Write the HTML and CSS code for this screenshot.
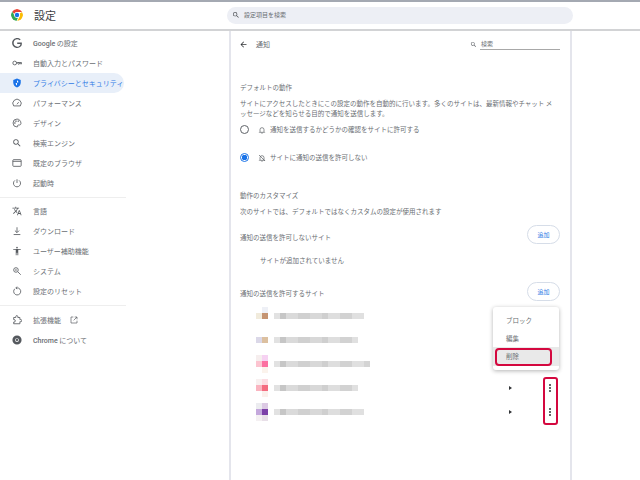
FILE: index.html
```html
<!DOCTYPE html>
<html lang="ja">
<head>
<meta charset="utf-8">
<title>設定</title>
<link rel="stylesheet" href="styles.css">
</head>
<body>
<header class="topbar">
  <div class="brand">
    <svg class="logo" viewBox="0 0 24 24" aria-hidden="true">
      <path fill="#ea4335" d="M12 0a12 12 0 0 1 10.4 6H12a6 6 0 0 0-5.6 3.8L2.3 4.9A12 12 0 0 1 12 0z"/>
      <path fill="#fbbc04" d="M22.4 6A12 12 0 0 1 12.6 24l4.6-8.6A6 6 0 0 0 17.2 9z"/>
      <path fill="#34a853" d="M2.3 4.9l5.2 9A6 6 0 0 0 14 17.7L11 24A12 12 0 0 1 2.3 4.9z"/>
      <circle cx="12" cy="12" r="5.6" fill="#fff"/>
      <circle cx="12" cy="12" r="4.4" fill="#1a73e8"/>
    </svg>
    <h1 class="brand-title">設定</h1>
  </div>
  <div class="global-search">
    <svg class="global-search-icon" viewBox="0 0 24 24"><path d="M15.5 14h-.79l-.28-.27A6.47 6.47 0 0 0 16 9.5 6.5 6.5 0 1 0 9.5 16c1.61 0 3.09-.59 4.23-1.57l.27.28v.79l5 4.99L20.49 19l-4.99-5zm-6 0C7.01 14 5 11.99 5 9.5S7.01 5 9.5 5 14 7.01 14 9.5 11.99 14 9.5 14z"/></svg>
    <span>設定項目を検索</span>
  </div>
</header>

<div class="shell">
  <nav class="sidebar">
    <a class="nav-item"><svg class="nav-icon" viewBox="0 0 24 24"><path d="M12.48 10.92v3.28h7.84c-.24 1.84-.85 3.19-1.79 4.13-1.15 1.15-2.93 2.4-6.05 2.4-4.83 0-8.6-3.89-8.6-8.72s3.77-8.72 8.6-8.72c2.6 0 4.51 1.03 5.91 2.35l2.31-2.31C18.75 1.44 16.13 0 12.48 0 5.87 0 .31 5.39.31 12s5.56 12 12.17 12c3.57 0 6.27-1.17 8.37-3.36 2.16-2.16 2.84-5.21 2.84-7.67 0-.76-.05-1.47-.17-2.05H12.48z"/></svg><span><b class="latin">Google</b> の設定</span></a>
    <a class="nav-item"><svg class="nav-icon line" viewBox="0 0 24 24"><circle cx="6.500" cy="12" r="4.500"/><circle cx="16" cy="13" r="2"/><path d="M11 11h12v4"/><path d="M20 11v4"/></svg><span>自動入力とパスワード</span></a>
    <a class="nav-item is-active"><svg class="nav-icon" viewBox="0 0 24 24"><path d="M12 1L3 5v6c0 5.55 3.84 10.74 9 12 5.16-1.26 9-6.45 9-12V5l-9-4z"/><path class="shield-mark" d="M12 6a3 3 0 0 1 3 3v2h-3zM9 12h3v6a6 6 0 0 1-3-5z"/></svg><span>プライバシーとセキュリティ</span></a>
    <a class="nav-item"><svg class="nav-icon line" viewBox="0 0 24 24"><path d="M4 19a10 10 0 1 1 16 0z"/><path d="M12 15l4-5"/></svg><span>パフォーマンス</span></a>
    <a class="nav-item"><svg class="nav-icon line" viewBox="0 0 24 24"><path d="M12 2.500a9.500 9.500 0 0 0 0 19c1.600 0 2-1 1.600-2-.6-1.500.3-2.700 1.800-2.700H18c2 0 3.500-1.500 3.500-4 0-5.800-4.300-10.300-9.500-10.300z"/><circle cx="7" cy="12" r="1"/><circle cx="9.500" cy="7.500" r="1"/><circle cx="15" cy="7.500" r="1"/></svg><span>デザイン</span></a>
    <a class="nav-item"><svg class="nav-icon" viewBox="0 0 24 24"><path d="M15.5 14h-.79l-.28-.27A6.47 6.47 0 0 0 16 9.5 6.5 6.5 0 1 0 9.5 16c1.61 0 3.09-.59 4.23-1.57l.27.28v.79l5 4.99L20.49 19l-4.99-5zm-6 0C7.01 14 5 11.99 5 9.5S7.01 5 9.5 5 14 7.01 14 9.5 11.99 14 9.5 14z"/></svg><span>検索エンジン</span></a>
    <a class="nav-item"><svg class="nav-icon line" viewBox="0 0 24 24"><rect x="2" y="4" width="20" height="16" rx="2"/><path d="M2 8h20"/></svg><span>既定のブラウザ</span></a>
    <a class="nav-item"><svg class="nav-icon line" viewBox="0 0 24 24"><path d="M12 3v9"/><path d="M7 5.800a8.500 8.500 0 1 0 10 0"/></svg><span>起動時</span></a>
    <hr class="nav-rule">
    <a class="nav-item"><svg class="nav-icon" viewBox="0 0 24 24"><path d="M12.870 15.070l-2.540-2.510.03-.03c1.740-1.940 2.980-4.170 3.710-6.530H17V4h-7V2H8v2H1v1.990h11.170C11.500 7.920 10.440 9.750 9 11.350 8.070 10.320 7.300 9.190 6.690 8h-2c.73 1.630 1.730 3.170 2.980 4.560l-5.090 5.020L4 19l5-5 3.110 3.110.76-2.040zM18.500 10h-2L12 22h2l1.120-3h4.750L21 22h2l-4.500-12zm-2.620 7l1.620-4.330L19.120 17h-3.240z"/></svg><span>言語</span></a>
    <a class="nav-item"><svg class="nav-icon line" viewBox="0 0 24 24"><path d="M12 3v12"/><path d="M7 11l5 5 5-5"/><path d="M4 20.500h16"/></svg><span>ダウンロード</span></a>
    <a class="nav-item"><svg class="nav-icon" viewBox="0 0 24 24"><path d="M12 2c1.100 0 2 .9 2 2s-.9 2-2 2-2-.9-2-2 .9-2 2-2zm9 7h-6v13h-2v-6h-2v6H9V9H3V7h18v2z"/></svg><span>ユーザー補助機能</span></a>
    <a class="nav-item"><svg class="nav-icon line" viewBox="0 0 24 24"><circle cx="9.500" cy="9.500" r="5.500"/><path d="M14 14l7 7"/><path d="M9.500 7v5"/></svg><span>システム</span></a>
    <a class="nav-item"><svg class="nav-icon line" viewBox="0 0 24 24"><path d="M7 6.500a8.500 8.500 0 1 0 5-2h-2"/><path d="M12 1.500l-2.500 3 2.500 3"/></svg><span>設定のリセット</span></a>
    <hr class="nav-rule tall">
    <a class="nav-item"><svg class="nav-icon line" viewBox="0 0 24 24"><path d="M4 6h5V4a2.500 2.500 0 0 1 5 0v2h5v5h2a2.500 2.500 0 0 1 0 5h-2v5H4v-4h1a3 3 0 0 0 0-6H4z"/></svg><span>拡張機能</span><svg class="nav-external" viewBox="0 0 24 24"><path d="M10 3H3v18h18v-7"/><path d="M14 3h7v7"/><path d="M21 3L11 13"/></svg></a>
    <a class="nav-item"><svg class="nav-icon" viewBox="0 0 24 24"><path d="M12 1a11 11 0 1 0 0 22 11 11 0 0 0 0-22zm0 6.500a4.500 4.500 0 1 1 0 9 4.500 4.500 0 0 1 0-9z"/><circle cx="12" cy="12" r="2.800"/></svg><span><b class="latin">Chrome</b> について</span></a>
  </nav>

  <main class="panel">
    <div class="subpage-head">
      <svg class="back" viewBox="0 0 24 24"><path d="M20 11H7.800l5.600-5.600L12 4l-8 8 8 8 1.400-1.400L7.800 13H20z"/></svg>
      <span class="subpage-title">通知</span>
      <div class="field">
        <svg class="field-icon" viewBox="0 0 24 24"><path d="M15.5 14h-.79l-.28-.27A6.47 6.47 0 0 0 16 9.5 6.5 6.5 0 1 0 9.5 16c1.61 0 3.09-.59 4.23-1.57l.27.28v.79l5 4.99L20.49 19l-4.99-5zm-6 0C7.01 14 5 11.99 5 9.5S7.01 5 9.5 5 14 7.01 14 9.5 11.99 14 9.5 14z"/></svg>
        <span class="field-input">検索</span>
      </div>
    </div>

    <h2 class="section-label first">デフォルトの動作</h2>
    <p class="desc">サイトにアクセスしたときにこの設定の動作を自動的に行います。多くのサイトは、最新情報やチャット メッセージなどを知らせる目的で通知を送信します。</p>

    <div class="radio-row">
      <span class="radio"></span>
      <svg class="bell" viewBox="0 0 24 24"><path d="M6 17v-6a6 6 0 0 1 12 0v6l2 2H4z"/><path d="M10 21.500h4"/></svg>
      <span>通知を送信するかどうかの確認をサイトに許可する</span>
    </div>
    <div class="radio-row second">
      <span class="radio is-on"></span>
      <svg class="bell" viewBox="0 0 24 24"><path d="M6 17v-6a6 6 0 0 1 12 0v6l2 2H4z"/><path d="M10 21.500h4"/><path d="M3 3l18 18"/></svg>
      <span>サイトに通知の送信を許可しない</span>
    </div>

    <h2 class="section-label custom">動作のカスタマイズ</h2>
    <p class="desc one">次のサイトでは、デフォルトではなくカスタムの設定が使用されます</p>

    <div class="list-head block">
      <span class="list-title">通知の送信を許可しないサイト</span>
      <button class="add-btn">追加</button>
    </div>
    <p class="empty">サイトが追加されていません</p>

    <div class="list-head allow">
      <span class="list-title">通知の送信を許可するサイト</span>
      <button class="add-btn">追加</button>
    </div>

    <ul class="sites">
      <li class="site">
        <svg class="favicon" viewBox="0 0 12 18"><rect x="6" width="6" height="6" fill="#eef0f6"/><rect y="6" width="6" height="6" fill="#f1ebdc"/><rect x="6" y="6" width="6" height="6" fill="#c59472"/></svg>
        <span class="mosaic w90"></span>
      </li>
      <li class="site">
        <svg class="favicon" viewBox="0 0 12 18"><rect y="6" width="6" height="6" fill="#dbd8e8"/><rect x="6" y="6" width="6" height="6" fill="#dcc0a0"/></svg>
        <span class="mosaic w84"></span>
      </li>
      <li class="site">
        <svg class="favicon" viewBox="0 0 12 18"><rect width="6" height="6" fill="#f6eeee"/><rect x="6" width="6" height="6" fill="#f6d2f2"/><rect y="6" width="6" height="6" fill="#fcc4d0"/><rect x="6" y="6" width="6" height="6" fill="#fc70a0"/><rect x="6" y="12" width="6" height="6" fill="#fbf3ec"/></svg>
        <span class="mosaic w96"></span>
      </li>
      <li class="site">
        <svg class="favicon" viewBox="0 0 12 18"><rect width="6" height="6" fill="#f8f0f0"/><rect x="6" width="6" height="6" fill="#fcdce2"/><rect y="6" width="6" height="6" fill="#fab4c0"/><rect x="6" y="6" width="6" height="6" fill="#f46c80"/><rect x="6" y="12" width="6" height="6" fill="#fbf0ec"/></svg>
        <span class="mosaic w84"></span>
        <span class="caret"></span>
        <span class="kebab"><i></i><i></i><i></i></span>
      </li>
      <li class="site">
        <svg class="favicon" viewBox="0 0 12 18"><rect width="6" height="6" fill="#ececf0"/><rect x="6" width="6" height="6" fill="#dccae4"/><rect y="6" width="6" height="6" fill="#c4a8dc"/><rect x="6" y="6" width="6" height="6" fill="#7c40a8"/><rect y="12" width="6" height="6" fill="#f4f0f2"/><rect x="6" y="12" width="6" height="6" fill="#e8dfe8"/></svg>
        <span class="mosaic w90"></span>
        <span class="caret"></span>
        <span class="kebab"><i></i><i></i><i></i></span>
      </li>
    </ul>

    <div class="menu">
      <div class="menu-item">ブロック</div>
      <div class="menu-item">編集</div>
      <div class="menu-item is-hover">削除</div>
    </div>
    <div class="mark mark-delete"></div>
    <div class="mark mark-kebabs"></div>
  </main>
</div>
</body>
</html>
```

FILE: styles.css
```css
* { box-sizing: border-box; }
html, body { margin: 0; height: 100%; }
body {
  width: 640px;
  height: 480px;
  overflow: hidden;
  background: #fff;
  color: #6a6e73;
  font-family: "Noto Sans CJK JP", "Noto Sans", sans-serif;
  font-size: 7px;
  line-height: 10px;
  display: flex;
  flex-direction: column;
  border-top: 2px solid #a4a9b2;
}

/* top bar */
.topbar {
  flex: none;
  height: 29px;
  display: flex;
  align-items: center;
  border-bottom: 2px solid #d2d3d5;
  position: relative;
}
.brand {
  width: 227px;
  display: flex;
  align-items: center;
  padding-left: 11px;
  margin-top: -2px;
  flex: none;
}
.logo { width: 12px; height: 12px; flex: none; border-radius: 50%; }
.brand-title {
  margin: 0 0 0 11px;
  font-size: 11px;
  line-height: 16px;
  font-weight: 400;
  color: #3c4043;
}
.global-search {
  width: 346px;
  height: 17px;
  margin-top: -1px;
  border-radius: 9px;
  background: #edeff5;
  display: flex;
  align-items: center;
  gap: 4px;
  padding-left: 5px;
  font-size: 6px;
}
.global-search-icon { width: 8px; height: 8px; fill: #4a4e52; flex: none; }

/* shell */
.shell { flex: 1; display: flex; min-height: 0; }
.sidebar { width: 229px; flex: none; padding-top: 2px; }
.nav-item {
  width: 124px;
  height: 20px;
  display: flex;
  align-items: center;
  padding-left: 12px;
  border-radius: 0 10px 10px 0;
  color: #6a6e73;
}
.nav-item span { margin-left: 11px; white-space: nowrap; }
.nav-icon { width: 10px; height: 10px; flex: none; fill: #55595e; }
.nav-icon.line { fill: none; stroke: #55595e; stroke-width: 2; }
.nav-external {
  width: 8px; height: 8px; flex: none; margin-left: 9px;
  fill: none; stroke: #55595e; stroke-width: 2;
}
.latin { font-family: "Roboto", sans-serif; font-weight: 500; }
.is-active { background: #e8eff9; color: #2f7ae5; }
.is-active .nav-icon { fill: #1a73e8; }
.shield-mark { fill: #fff; }
.nav-rule {
  width: 126px;
  height: 1px;
  margin: 4px 0 3px;
  border: 0;
  background: #eeeeee;
}
.nav-rule.tall { margin-bottom: 4px; }

/* panel */
.panel {
  position: relative;
  width: 343px;
  flex: none;
  border-left: 2px solid #e4e5ec;
  border-right: 2px solid #e4e5ec;
  padding: 0 10px 0 9px;
  font-size: 6.5px;
}
.subpage-head {
  height: 26px;
  display: flex;
  align-items: center;
  margin-left: -1px;
}
.back { width: 9px; height: 9px; fill: #303336; flex: none; }
.subpage-title { margin-left: 8px; font-size: 7px; }
.field { margin-left: auto; display: flex; align-items: center; gap: 3px; }
.field-icon { width: 7px; height: 7px; fill: #55595e; flex: none; }
.field-input {
  width: 80px;
  height: 11px;
  line-height: 10px;
  font-size: 6px;
  border-bottom: 1px solid #a8a8a8;
  padding-left: 1px;
}
.section-label { margin: 0; font-size: 6.5px; line-height: 10px; font-weight: 400; }
.section-label.first { margin-top: 25px; }
.desc { margin: 6px 0 0; width: 316px; line-height: 10px; }
.radio-row {
  display: flex;
  align-items: center;
  height: 12px;
  margin-top: 5px;
}
.radio-row.second { margin-top: 16px; }
.radio {
  width: 9px; height: 9px; flex: none;
  border: 1px solid #5f6368;
  border-radius: 50%;
  background: #fff;
}
.radio.is-on {
  border-color: #1a73e8;
  background: radial-gradient(circle, #1a73e8 0 2.6px, #fff 3px);
}
.bell {
  width: 8px; height: 8px; flex: none; margin: 1px 4px 0 9px;
  fill: none; stroke: #55595e; stroke-width: 2;
}
.section-label.custom { margin-top: 27px; }
.desc.one { width: auto; }
.list-head {
  display: flex;
  justify-content: space-between;
  align-items: center;
  height: 19px;
}
.list-head.block { margin-top: 9px; }
.list-head.allow { margin-top: 17px; }
.block .list-title { margin-top: 5px; }
.allow .list-title { margin-top: 3px; }
.add-btn {
  width: 33px;
  height: 19px;
  padding: 0;
  font: inherit;
  font-size: 6px;
  background: #fff;
  color: #2f7ae5;
  border: 1px solid #d6dde8;
  border-radius: 10px;
}
.empty { margin: 11px 0 0 20px; }

/* site rows */
.sites { list-style: none; margin: 3px 0 0; padding: 0 0 0 16px; }
.site { display: flex; align-items: center; height: 24px; position: relative; }
.favicon { width: 12px; height: 18px; flex: none; }
.mosaic {
  height: 6px;
  margin-left: 6px;
  flex: none;
  background-color: #d6d6d6;
  background-image:
    linear-gradient(90deg, #e2e2e2 0 6px, #c6c6c6 6px 12px, #dadada 12px 24px, #d0d0d0 24px 36px, #d8d8d8 36px 48px, #cfcfcf 48px 54px, #dedede 54px 66px, #d2d2d2 66px 78px, #e0e0e0 78px 90px, #d4d4d4 90px);
}
.w84 { width: 84px; }
.w90 { width: 90px; }
.w96 { width: 96px; }
.caret {
  position: absolute;
  left: 253px;
  top: 10px;
  border-left: 3px solid #303336;
  border-top: 2px solid transparent;
  border-bottom: 2px solid transparent;
}
.kebab {
  position: absolute;
  left: 293px;
  top: 8px;
  display: flex;
  flex-direction: column;
  gap: 1px;
}
.kebab i { width: 2px; height: 2px; background: #303336; border-radius: 50%; }

/* overlays */
.menu {
  position: absolute;
  left: 262px;
  top: 276px;
  width: 66px;
  height: 63px;
  background: #fff;
  border-radius: 3px;
  box-shadow: 0 1px 4px rgba(0, 0, 0, .3);
  padding-top: 4px;
}
.menu-item {
  height: 18px;
  line-height: 18px;
  padding-left: 13px;
}
.menu-item.is-hover { background: #e9e9e9; height: 19px; }
.mark { position: absolute; border: 2px solid #d4083f; }
.mark-delete { left: 264px; top: 317px; width: 57px; height: 18px; border-radius: 4px; }
.mark-kebabs { left: 312px; top: 346px; width: 15px; height: 48px; border-radius: 3px; }
```
